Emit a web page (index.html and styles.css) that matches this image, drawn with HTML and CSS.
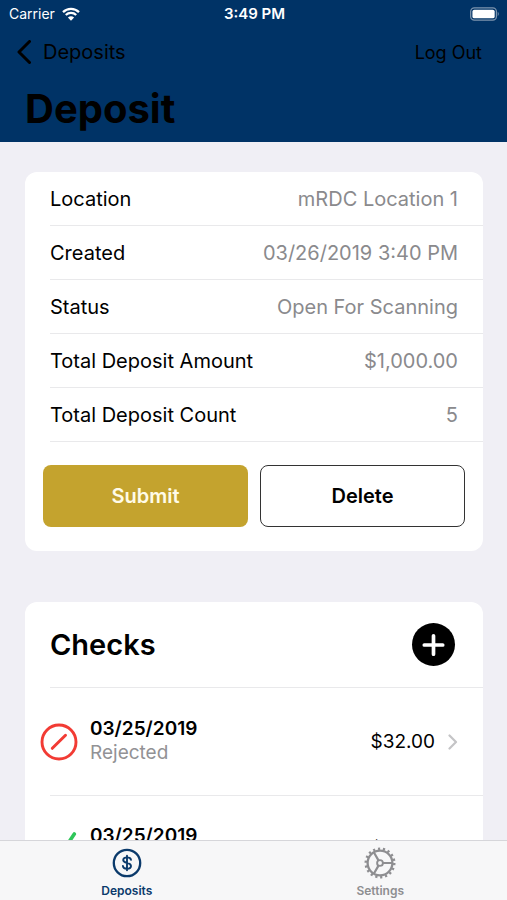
FILE: index.html
```html
<!DOCTYPE html>
<html lang="en">
<head>
<meta charset="utf-8">
<meta name="viewport" content="width=device-width, initial-scale=1">
<title>Deposit</title>
<link rel="stylesheet" href="styles.css">
</head>
<body>
<header class="header">
  <div class="status">
    <div class="carrier">
      <span>Carrier</span>
      <svg class="wifi" viewBox="0 0 18 14" aria-hidden="true"><path d="M1 5.1A11.500 11.500 0 0 1 17 5.100M3.800 8A7.500 7.500 0 0 1 14.200 8" fill="none" stroke="#fff" stroke-width="2.300"/><path d="M9 13.800L5.900 10.600A4.500 4.500 0 0 1 12.100 10.600Z" fill="#fff"/></svg>
    </div>
    <span class="time">3:49 PM</span>
    <svg class="battery" viewBox="0 0 31 14" aria-hidden="true"><rect x=".7" y=".7" width="26.600" height="12.600" rx="3.800" fill="none" stroke="#7d95ae" stroke-width="1.300"/><rect x="2.500" y="2.500" width="23" height="9" rx="2" fill="#fff"/><path d="M28.700 4.700q2 2.300 0 4.600z" fill="#7d95ae"/></svg>
  </div>
  <nav class="nav">
    <a class="back" href="#deposits">
      <svg class="back-icon" viewBox="0 0 14 24" aria-hidden="true"><path d="M12.500 1.500L2 12L12.500 22.500" fill="none" stroke="#000" stroke-width="3" stroke-linecap="round" stroke-linejoin="round"/></svg>
      <span>Deposits</span>
    </a>
    <button class="logout" type="button">Log Out</button>
  </nav>
  <h1 class="title">Deposit</h1>
</header>

<main class="content">
  <section class="card">
    <dl class="details">
      <div class="row"><dt>Location</dt><dd>mRDC Location 1</dd></div>
      <div class="row"><dt>Created</dt><dd>03/26/2019 3:40 PM</dd></div>
      <div class="row"><dt>Status</dt><dd>Open For Scanning</dd></div>
      <div class="row"><dt>Total Deposit Amount</dt><dd>$1,000.00</dd></div>
      <div class="row"><dt>Total Deposit Count</dt><dd>5</dd></div>
    </dl>
    <div class="actions">
      <button class="button submit" type="button">Submit</button>
      <button class="button delete" type="button">Delete</button>
    </div>
  </section>

  <section class="card">
    <div class="checks-head">
      <h2>Checks</h2>
      <button class="add" type="button" aria-label="Add check">
        <svg viewBox="0 0 42 42" aria-hidden="true"><path d="M21 12.500V30.500M12 21.500H30" stroke="#fff" stroke-width="3.600" stroke-linecap="round"/></svg>
      </button>
    </div>
    <a class="check" href="#check-1">
      <svg class="state" viewBox="0 0 38 38" aria-hidden="true"><circle cx="19" cy="19" r="17" fill="none" stroke="#f23b34" stroke-width="2.900"/><path d="M12.300 25.300L25.500 12.300" stroke="#f23b34" stroke-width="3" stroke-linecap="round"/></svg>
      <span class="info"><strong>03/25/2019</strong><span class="note">Rejected</span></span>
      <span class="amount">$32.00</span>
      <svg class="chevron" viewBox="0 0 10 16" aria-hidden="true"><path d="M1.500 1.500L8 8L1.500 14.500" fill="none" stroke="#c4c4c6" stroke-width="2.200" stroke-linecap="round" stroke-linejoin="round"/></svg>
    </a>
    <a class="check" href="#check-2">
      <svg class="state" viewBox="0 0 38 38" aria-hidden="true"><path d="M7 23L15 33L34.300 4" fill="none" stroke="#2fc65a" stroke-width="3.600" stroke-linecap="round" stroke-linejoin="round"/></svg>
      <span class="info"><strong>03/25/2019</strong></span>
      <span class="amount">$32.00</span>
      <svg class="chevron" viewBox="0 0 10 16" aria-hidden="true"><path d="M1.500 1.500L8 8L1.500 14.500" fill="none" stroke="#c4c4c6" stroke-width="2.200" stroke-linecap="round" stroke-linejoin="round"/></svg>
    </a>
  </section>
</main>

<nav class="tabs">
  <a class="tab active" href="#deposits">
    <svg viewBox="0 0 32 32" aria-hidden="true"><circle cx="16" cy="16" r="13.200" fill="none" stroke="currentColor" stroke-width="2.300"/><path d="M20 12.800C19.700 11.100 18.200 10.400 16 10.400C13.700 10.400 12.200 11.400 12.200 13C12.200 14.800 13.700 15.300 16 15.900C18.500 16.500 20 17.200 20 19C20 20.700 18.300 21.700 16 21.700C13.600 21.700 12 20.700 11.900 18.900M16 8.800V23.200" fill="none" stroke="currentColor" stroke-width="1.900" stroke-linecap="round"/></svg>
    <span>Deposits</span>
  </a>
  <a class="tab" href="#settings">
    <svg viewBox="0 0 32 32" aria-hidden="true"><g fill="none" stroke="currentColor"><circle cx="16" cy="16" r="12.400" stroke-width="2.300"/><circle cx="16" cy="16" r="14.300" stroke-width="2.400" stroke-dasharray="2.200 2.792"/><circle cx="16" cy="16" r="2.900" stroke-width="1.900"/><path d="M19 16H28.400M14.500 13.400L9.800 5.300M14.500 18.600L9.800 26.700" stroke-width="2.200"/></g></svg>
    <span>Settings</span>
  </a>
</nav>
</body>
</html>
```
FILE: styles.css
```css
* {
  box-sizing: border-box;
}

body {
  margin: 0;
  height: 100vh;
  display: flex;
  flex-direction: column;
  background: #f0eff5;
  color: #000;
  font-family: Inter, "Liberation Sans", sans-serif;
  font-size: 20px;
}

a {
  color: inherit;
  text-decoration: none;
}

button {
  font: inherit;
  color: inherit;
  padding: 0;
  border: 0;
  background: none;
  cursor: pointer;
}

svg {
  display: block;
  flex: none;
}

.header {
  flex: none;
  padding-bottom: 8px;
  background: #003366;
}

.status {
  display: grid;
  grid-template-columns: 1fr auto 1fr;
  align-items: center;
  height: 27px;
  padding: 0 7px 0 9px;
  color: #fff;
  font-size: 14px;
}

.carrier {
  display: flex;
  align-items: center;
  gap: 7px;
}

.wifi {
  width: 18px;
  height: 14px;
}

.time {
  font-size: 15px;
  font-weight: 600;
}

.battery {
  justify-self: end;
  width: 30px;
  height: 14px;
}

.nav {
  display: flex;
  justify-content: space-between;
  align-items: center;
  height: 50px;
  padding: 0 25px 0 17px;
}

.back {
  display: flex;
  align-items: center;
  gap: 12px;
}

.back-icon {
  width: 14px;
  height: 24px;
}

.logout {
  font-size: 18px;
}

.title {
  margin: 0;
  padding: 7px 25px 0;
  font-size: 40px;
  line-height: 50px;
  font-weight: 700;
}

.content {
  flex: 1;
  min-height: 0;
  display: flex;
  flex-direction: column;
  gap: 51px;
  padding: 30px 24px 0 25px;
  overflow-y: auto;
  scrollbar-width: none;
}

.card {
  flex: none;
  border-radius: 12px;
  background: #fff;
}

.details {
  margin: 0;
  padding-left: 25px;
}

.row {
  display: flex;
  justify-content: space-between;
  align-items: center;
  height: 54px;
  padding-right: 25px;
  border-bottom: 1px solid #e9e9eb;
}

.row dd {
  margin: 0;
  color: #8a8a8d;
}

.actions {
  display: grid;
  grid-template-columns: 1fr 1fr;
  gap: 12px;
  padding: 23px 18px 24px;
}

.button {
  height: 62px;
  border-radius: 8px;
  font-weight: 600;
}

.submit {
  background: #c4a32e;
  color: #fffbe8;
}

.delete {
  border: 1px solid #333;
}

.checks-head {
  display: flex;
  justify-content: space-between;
  align-items: center;
  height: 86px;
  margin-left: 25px;
  padding-right: 28px;
  border-bottom: 1px solid #e9e9eb;
}

.checks-head h2 {
  margin: 0;
  font-size: 29px;
  font-weight: 600;
}

.add {
  width: 43px;
  height: 43px;
  border-radius: 50%;
  background: #000;
}

.check {
  display: flex;
  align-items: center;
  height: 107px;
  padding: 0 25px 0 15px;
}

.check + .check {
  background: linear-gradient(#e9e9eb, #e9e9eb) 25px 0 / 100% 1px no-repeat;
}

.state {
  width: 38px;
  height: 38px;
}

.info {
  flex: 1;
  display: flex;
  flex-direction: column;
  min-height: 50px;
  margin-left: 12px;
  font-size: 19px;
  line-height: 24px;
}

.info strong {
  font-weight: 600;
}

.note {
  color: #929295;
}

.amount {
  font-size: 19px;
}

.chevron {
  width: 10px;
  height: 16px;
  margin-left: 13px;
}

.tabs {
  flex: none;
  display: grid;
  grid-template-columns: 1fr 1fr;
  height: 60px;
  border-top: 1px solid #d6d6da;
  background: #f7f7f8;
}

.tab {
  display: flex;
  flex-direction: column;
  align-items: center;
  gap: 4px;
  padding-top: 6px;
  color: #8e8e91;
  font-size: 12px;
  line-height: 16px;
  font-weight: 600;
}

.tab svg {
  width: 32px;
  height: 32px;
}

.active {
  color: #0b3a6b;
}
```
